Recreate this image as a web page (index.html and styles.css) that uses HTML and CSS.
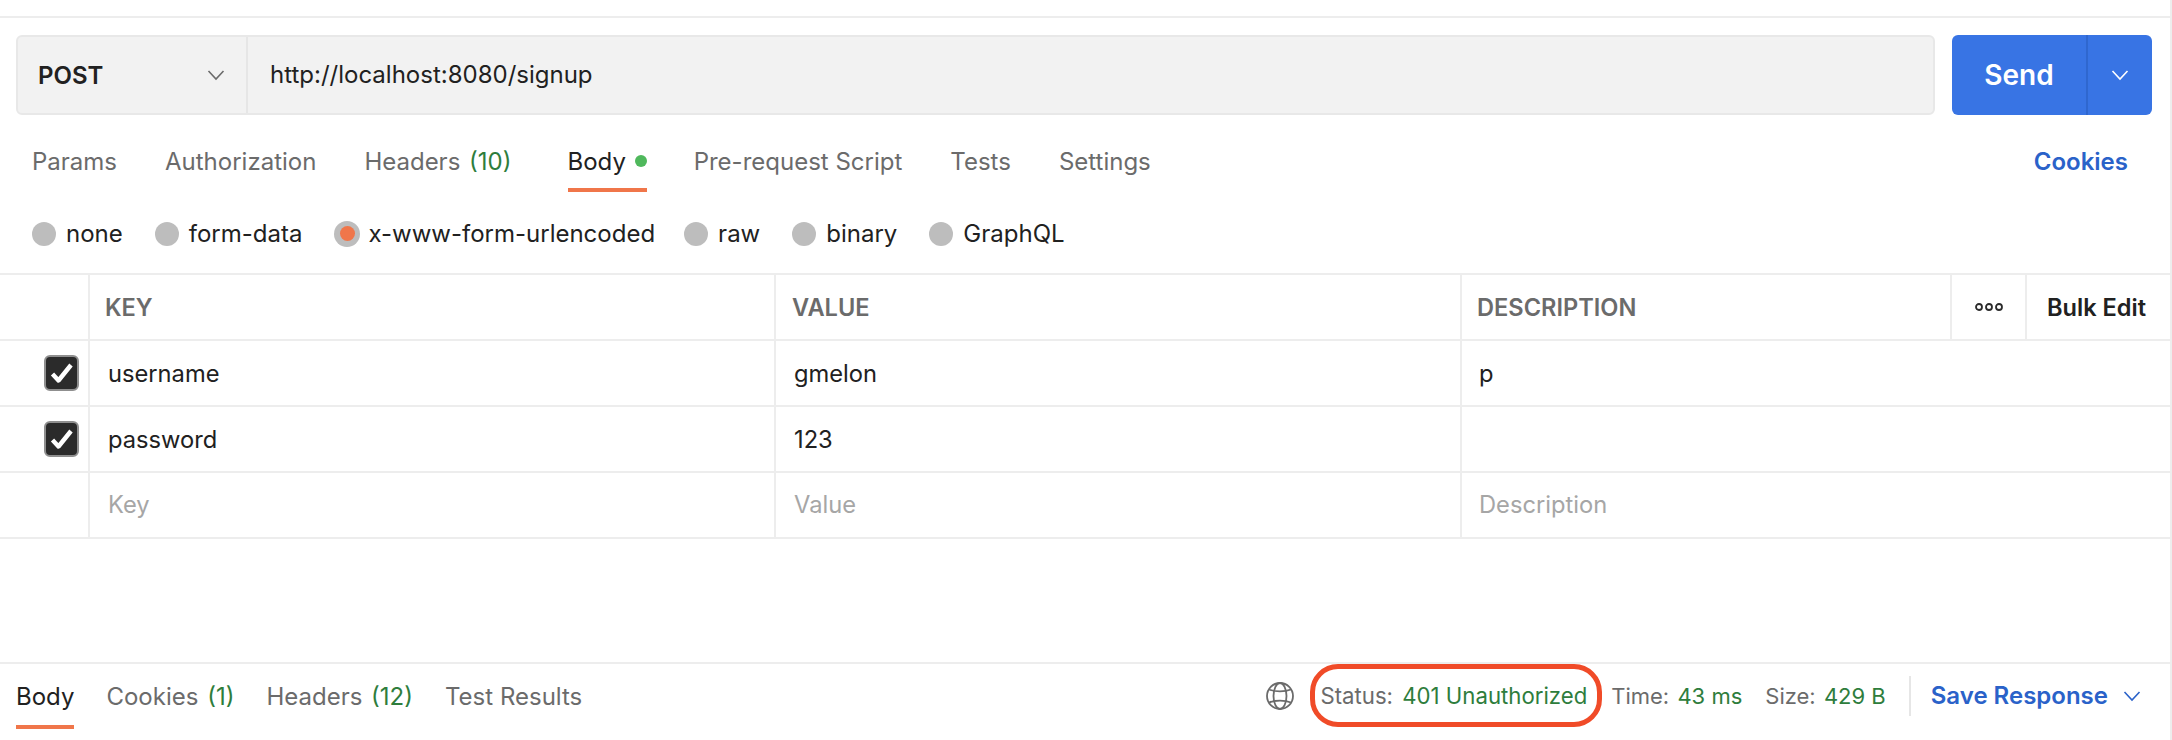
FILE: index.html
```html
<!DOCTYPE html>
<html lang="en">
<head>
<meta charset="utf-8">
<title>POST signup</title>
<link rel="stylesheet" href="styles.css">
</head>
<body>
<div class="app">
  <div class="request-bar">
    <div class="url-group">
      <div class="method"><span>POST</span>
        <svg class="chev" width="18" height="12" viewBox="0 0 18 12"><path d="M1.500 2 9 10l7.500-8" fill="none" stroke="#6b6b6b" stroke-width="1.6"/></svg>
      </div>
      <div class="url">http://localhost:8080/signup</div>
    </div>
    <div class="send">
      <span class="send-label">Send</span>
      <span class="send-more"><svg width="18" height="12" viewBox="0 0 18 12"><path d="M1.500 2 9 10l7.500-8" fill="none" stroke="#fff" stroke-width="1.6"/></svg></span>
    </div>
  </div>

  <nav class="tabs req-tabs">
    <a class="tab">Params</a>
    <a class="tab">Authorization</a>
    <a class="tab">Headers <em>(10)</em></a>
    <a class="tab active body-tab">Body <i class="dot"></i></a>
    <a class="tab">Pre-request Script</a>
    <a class="tab">Tests</a>
    <a class="tab">Settings</a>
    <a class="cookies">Cookies</a>
  </nav>

  <div class="body-types">
    <label class="radio"><i></i>none</label>
    <label class="radio"><i></i>form-data</label>
    <label class="radio on"><i></i>x-www-form-urlencoded</label>
    <label class="radio"><i></i>raw</label>
    <label class="radio"><i></i>binary</label>
    <label class="radio"><i></i>GraphQL</label>
  </div>

  <div class="table">
    <div class="row head">
      <div class="cell check"></div>
      <div class="cell">KEY</div>
      <div class="cell">VALUE</div>
      <div class="cell">DESCRIPTION</div>
      <div class="cell more"><svg width="30" height="10" viewBox="0 0 30 10"><g fill="none" stroke="#2b2b2b" stroke-width="1.8"><circle cx="5" cy="5" r="3"/><circle cx="15" cy="5" r="3"/><circle cx="25" cy="5" r="3"/></g></svg></div>
      <div class="cell bulk">Bulk Edit</div>
    </div>
    <div class="row">
      <div class="cell check"><span class="box"><svg width="28" height="28" viewBox="0 0 28 28"><path d="M4.500 15 10.500 21.500 23 6" fill="none" stroke="#fff" stroke-width="4.4" stroke-linejoin="round"/></svg></span></div>
      <div class="cell">username</div>
      <div class="cell">gmelon</div>
      <div class="cell wide">p</div>
    </div>
    <div class="row">
      <div class="cell check"><span class="box"><svg width="28" height="28" viewBox="0 0 28 28"><path d="M4.500 15 10.500 21.500 23 6" fill="none" stroke="#fff" stroke-width="4.4" stroke-linejoin="round"/></svg></span></div>
      <div class="cell">password</div>
      <div class="cell">123</div>
      <div class="cell wide"></div>
    </div>
    <div class="row empty">
      <div class="cell check"></div>
      <div class="cell">Key</div>
      <div class="cell">Value</div>
      <div class="cell wide">Description</div>
    </div>
  </div>

  <div class="response">
    <nav class="tabs res-tabs">
      <a class="tab active">Body</a>
      <a class="tab">Cookies <em>(1)</em></a>
      <a class="tab">Headers <em>(12)</em></a>
      <a class="tab">Test Results</a>
    </nav>
    <div class="meta">
      <svg class="globe" width="30" height="30" viewBox="0 0 30 30"><g fill="none" stroke="#6b6b6b" stroke-width="1.8"><circle cx="15" cy="15" r="13"/><ellipse cx="15" cy="15" rx="6.500" ry="13"/><path d="M4 8.500c6 2.500 16 2.500 22 0M4 21.500c6-2.500 16-2.500 22 0"/></g></svg>
      <span class="status">Status: <em>401 Unauthorized</em></span>
      <span class="stat">Time: <em>43 ms</em></span>
      <span class="stat">Size: <em>429 B</em></span>
      <span class="sep"></span>
      <a class="save">Save Response</a>
      <svg class="save-chev" width="18" height="12" viewBox="0 0 18 12"><path d="M1.500 2 9 10l7.500-8" fill="none" stroke="#2a62c9" stroke-width="1.6"/></svg>
    </div>
  </div>
</div>
</body>
</html>
```

FILE: styles.css
```css
* { box-sizing: border-box; }
html, body { margin: 0; padding: 0; background: #fff; }
body { font-family: "Inter", "Liberation Sans", sans-serif; color: #212121; font-size: 24px; }
.app { width: 2172px; height: 740px; display: flex; flex-direction: column; padding-top: 16px; overflow: hidden; border-right: 2px solid #ededed; }

.request-bar { display: flex; gap: 17px; padding: 17px 18px 0 16px; border-top: 2px solid #ededed; height: 98px; flex: none; }
.url-group { flex: 1; display: flex; height: 80px; background: #f2f2f2; border: 2px solid #e8e8e8; border-radius: 6px; }
.method { width: 230px; flex: none; display: flex; align-items: center; justify-content: space-between; padding: 0 21px 0 20px; border-right: 2px solid #e6e6e6; font-weight: 600; }
.url { flex: 1; display: flex; align-items: center; padding: 0 0 2px 22px; }
.send { width: 200px; flex: none; display: flex; height: 80px; background: #3874e4; border-radius: 6px; color: #fff; }
.send-label { width: 136px; display: flex; align-items: center; justify-content: center; font-size: 28px; font-weight: 600; border-right: 2px solid #2f67cf; }
.send-more { flex: 1; display: flex; align-items: center; justify-content: center; }

.tabs { display: flex; }
.tab { color: #6b6b6b; position: relative; white-space: nowrap; }
.tab em { font-style: normal; color: #2e7d3c; margin-left: 2px; }
.status em { font-style: normal; color: #2e7d3c; margin-left: 3px; }
.stat em { font-style: normal; color: #2e7d3c; margin-left: 2px; }
.tab.active { color: #212121; }
.tab.active::after { content: ""; position: absolute; left: 0; right: 0; bottom: 0; height: 4px; background: #f0764a; }

.req-tabs { height: 78px; padding: 0 42px 0 32px; gap: 48px; flex: none; }
.req-tabs .tab { padding-top: 33px; }
.req-tabs .body-tab { margin: 0 -1px 0 8px; }
.dot { display: inline-block; width: 12px; height: 12px; border-radius: 50%; background: #4fb85c; margin-left: 2px; vertical-align: 3px; }
.cookies { margin-left: auto; padding-top: 33px; color: #2a62c9; font-weight: 600; }

.body-types { display: flex; height: 81px; flex: none; align-items: center; padding: 2px 32px 0; gap: 32px; }
.radio { display: flex; align-items: center; gap: 10px; }
.radio.on { gap: 8px; margin-right: -3px; }
.radio i { width: 24px; height: 24px; border-radius: 50%; background: #bdbdbd; display: flex; align-items: center; justify-content: center; }
.radio.on i { width: 26px; height: 26px; }
.radio.on i::after { content: ""; width: 15px; height: 15px; border-radius: 50%; background: #f0764a; }

.table { border-top: 2px solid #ededed; flex: none; }
.row { display: grid; grid-template-columns: 88px 686px 686px 490px 75px 1fr; height: 66px; border-bottom: 2px solid #ededed; font-size: 23.7px; }
.cell { display: flex; align-items: center; padding-left: 17px; border-left: 2px solid #ededed; }
.cell:first-child { border-left: 0; padding: 0 9px 0 0; justify-content: flex-end; }
.row > .cell:nth-child(2) { padding-left: 18px; }
.row > .cell:nth-child(3) { padding-left: 18px; }
.cell.wide { grid-column: 4 / -1; }
.head .cell { font-weight: 600; font-size: 23.6px; color: #6b6b6b; padding-left: 15px; }
.head .cell.more { padding: 0; justify-content: center; }
.head .cell.bulk { color: #212121; padding-left: 20px; }
.row.head > .cell:nth-child(2) { padding-left: 15px; }
.row.head > .cell:nth-child(3) { padding-left: 16px; }
.empty .cell { color: #a6a6a6; padding-bottom: 2px; }
.box { width: 35px; height: 36px; border-radius: 6px; background: #2b2b2b; border: 2px solid #8f8f8f; display: flex; align-items: center; justify-content: center; }

.response { margin-top: auto; height: 78px; border-top: 2px solid #ededed; display: flex; justify-content: space-between; padding: 0 29px 0 16px; flex: none; }
.res-tabs { gap: 32px; }
.res-tabs .tab { padding-top: 18px; height: 65px; }
.meta { display: flex; align-items: center; padding-bottom: 2px; height: 65px; }
.globe { margin-right: 25px; }
.status { position: relative; margin-right: 24px; color: #6b6b6b; font-size: 22.2px; }
.status::after { content: ""; position: absolute; left: -10px; right: -15px; top: -18px; bottom: -18px; border: 5px solid #f04b28; border-radius: 28px; }
.stat { color: #6b6b6b; font-size: 22px; margin-right: 23px; }
.sep { width: 2px; height: 40px; background: #e6e6e6; margin: 0 20px 0 0; }
.save { color: #2a62c9; font-weight: 600; margin-right: 15px; }
```
